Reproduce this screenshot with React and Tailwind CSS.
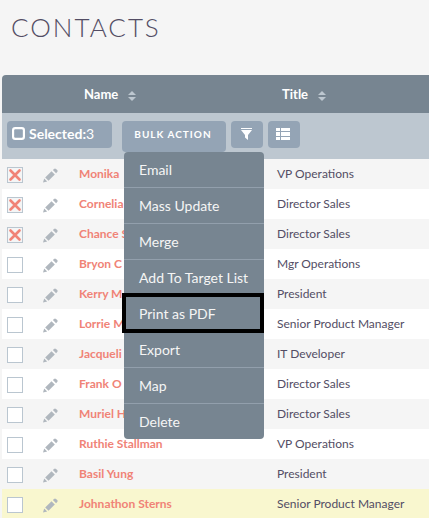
const contacts = [
  { name: 'Monika', title: 'VP Operations', checked: true },
  { name: 'Cornelia', title: 'Director Sales', checked: true },
  { name: 'Chance S', title: 'Director Sales', checked: true },
  { name: 'Bryon C', title: 'Mgr Operations' },
  { name: 'Kerry M', title: 'President' },
  { name: 'Lorrie M', title: 'Senior Product Manager' },
  { name: 'Jacqueli', title: 'IT Developer' },
  { name: 'Frank O', title: 'Director Sales' },
  { name: 'Muriel H', title: 'Director Sales' },
  { name: 'Ruthie Stallman', title: 'VP Operations' },
  { name: 'Basil Yung', title: 'President' },
  { name: 'Johnathon Sterns', title: 'Senior Product Manager', active: true },
];

const actions = ['Email', 'Mass Update', 'Merge', 'Add To Target List', 'Print as PDF', 'Export', 'Map', 'Delete'];

function SortIcon() {
  return (
    <svg className="mt-1 h-[10px] w-2 fill-[#bdc7d0]" viewBox="0 0 8 10" aria-hidden="true">
      <path d="M4 0 8 4H0zM0 6h8L4 10z" />
    </svg>
  );
}

function PencilIcon() {
  return (
    <svg className="block size-[15px] fill-[#b0b7be]" viewBox="0 0 15 15" aria-hidden="true">
      <path d="M0 14.5 1.2 10.6 4.2 13.6z" />
      <path d="M2.2 9.4 8.5 3.3 11.8 6.6 5.5 12.7z" />
      <path d="M9.9 2 11 .9Q12 0 13 .9L14.2 2.1Q15.1 3.1 14.2 4.1L13.1 5.2z" />
    </svg>
  );
}

function Check({ label, checked }) {
  return (
    <span className="relative block size-4">
      <input
        type="checkbox"
        aria-label={label}
        defaultChecked={checked}
        className="peer block size-4 appearance-none border border-[#bac6d0] bg-white checked:bg-[#f5f5f5]"
      />
      <svg
        className="pointer-events-none absolute inset-0 hidden size-4 peer-checked:block"
        viewBox="0 0 16 16"
        fill="none"
        stroke="#f08377"
        strokeWidth="2.6"
        strokeLinecap="round"
        aria-hidden="true"
      >
        <path d="M3.5 3.5 12.5 12.5M12.5 3.5 3.5 12.5" />
      </svg>
    </span>
  );
}

function SortHeader({ children }) {
  return (
    <button type="button" className="flex items-center gap-[10px] text-[13px] leading-5 font-bold text-white">
      {children}
      <SortIcon />
    </button>
  );
}

function BulkMenu() {
  return (
    <ul className="absolute top-full left-0 z-10 ml-[2px] w-[140px] rounded bg-[#778591] font-normal">
      {actions.map((action) => (
        <li key={action} className="relative h-9 border-b border-[#929fac] last:h-[35px] last:border-b-0">
          <a href="#" className="block pl-[15px] text-sm leading-9 whitespace-nowrap text-[#f5f5f5]">
            {action}
          </a>
          {action === 'Print as PDF' && (
            <span className="pointer-events-none absolute -top-[3px] right-0 -bottom-[2px] -left-[2px] border-4 border-black" />
          )}
        </li>
      ))}
    </ul>
  );
}

export default function App() {
  return (
    <main className="h-screen overflow-hidden bg-[#f5f5f5] font-['Lato',sans-serif] text-[#534d64]">
      <h1 className="px-[11px] pt-[7px] pb-7 text-[26px] leading-10 font-light tracking-[2px]">CONTACTS</h1>
      <div className="pl-[2px]">
        <table className="w-full table-fixed border-collapse text-left">
          <colgroup>
            <col className="w-9" />
            <col className="w-9" />
            <col className="w-[198px]" />
            <col />
          </colgroup>
          <thead>
            <tr className="h-[38px]">
              <td className="rounded-tl bg-[#778591]" />
              <td className="bg-[#778591]" />
              <th scope="col" className="bg-[#778591] p-0 pl-[10px]">
                <SortHeader>Name</SortHeader>
              </th>
              <th scope="col" className="bg-[#778591] p-0 pl-[10px]">
                <SortHeader>Title</SortHeader>
              </th>
            </tr>
            <tr className="h-[46px] bg-[#bdc7d0]">
              <td colSpan={4} className="p-0 pl-[5px] align-top">
                <div className="flex items-start pt-2">
                  <button type="button" className="flex h-[27px] w-[105px] items-center gap-1 rounded bg-[#94a4b5] pb-[2px] pl-[5px] text-white">
                    <svg className="size-[13px]" viewBox="0 0 12 12" fill="none" stroke="white" strokeWidth="2" aria-hidden="true">
                      <rect x="1" y="1" width="10" height="10" rx="2" />
                    </svg>
                    <span className="text-sm">
                      <b className="font-bold">Selected:</b>3
                    </span>
                  </button>
                  <div className="relative ml-[10px]">
                    <button
                      type="button"
                      className="block h-[31px] w-[104px] rounded bg-[#94a4b5] pr-[2px] pb-1 text-[10px] font-bold tracking-[1px] whitespace-nowrap text-white"
                    >
                      BULK ACTION
                    </button>
                    <BulkMenu />
                  </div>
                  <button type="button" aria-label="Filter" className="ml-[5px] flex h-[27px] w-8 items-center justify-center rounded bg-[#94a4b5] pr-[2px] pb-[2px]">
                    <svg className="h-3 w-[11px] fill-white" viewBox="0 0 11 12" aria-hidden="true">
                      <path d="M0 0h11v1H0zM0 2h11L7 7v5L4 9.5V7z" />
                    </svg>
                  </button>
                  <button type="button" aria-label="Choose columns" className="ml-[5px] flex h-[27px] w-8 items-center justify-center rounded bg-[#94a4b5] pr-[2px] pb-[2px]">
                    <svg className="h-3 w-[14px] fill-white" viewBox="0 0 14 12" aria-hidden="true">
                      <path d="M0 0h4v3H0zM5 0h9v3H5zM0 4h4v4H0zM5 4h9v4H5zM0 9h4v3H0zM5 9h9v3H5z" />
                    </svg>
                  </button>
                </div>
              </td>
            </tr>
          </thead>
          <tbody>
            {contacts.map((contact) => (
              <tr
                key={contact.name}
                className={contact.active ? 'h-[30px] bg-[#f9f7cf]' : 'h-[30px] odd:bg-[#f5f5f5] even:bg-white'}
              >
                <td className="p-0 pt-[2px] pl-[5px]">
                  <Check label={`Select ${contact.name}`} checked={contact.checked} />
                </td>
                <td className="p-0 pt-[2px] pl-[5px]">
                  <a href="#" aria-label={`Edit ${contact.name}`} className="block">
                    <PencilIcon />
                  </a>
                </td>
                <td className="p-0 pl-[5px] text-xs leading-5">
                  <a href="#" className="font-bold text-[#f08377]">
                    {contact.name}
                  </a>
                </td>
                <td className="p-0 pl-[5px] text-xs leading-5 whitespace-nowrap">{contact.title}</td>
              </tr>
            ))}
          </tbody>
        </table>
      </div>
    </main>
  );
}
